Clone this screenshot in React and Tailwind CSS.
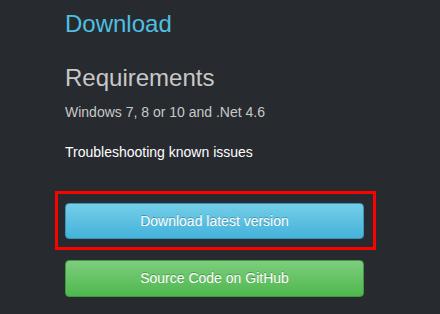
export default function App() {
  const font = { fontFamily: '"Liberation Sans", Arial, sans-serif' };
  return (
    <div className="w-[440px] h-[314px] bg-[#272b30] overflow-hidden" style={font}>
      <div className="pl-[65px] pt-[11px] flex flex-col">
        <h1 className="text-[24px] leading-[26px] text-[#4fbfe0]">Download</h1>
        <h2 className="mt-[28px] text-[24px] leading-[26px] text-[#c8c8c8]">Requirements</h2>
        <p className="mt-[11px] text-[14px] leading-[20px] text-[#c8c8c8]">Windows 7, 8 or 10 and .Net 4.6</p>
        <p className="mt-[20px] text-[14px] leading-[20px] text-white">Troubleshooting known issues</p>
      </div>
      <div className="ml-[55px] mt-[29px] w-[321px] border-[3px] border-[#ff0000] pl-[7px] pt-[9px] pb-[8px]">
        <button className="w-[299px] h-[36px] rounded-[4px] border border-[#3a97b8] bg-gradient-to-b from-[#74cee8] to-[#43b2da] text-white text-[14px] flex items-center justify-center [text-shadow:0_-1px_0_rgba(0,0,0,0.25)]">
          Download latest version
        </button>
      </div>
      <div className="ml-[65px] mt-[10px]">
        <button className="w-[299px] h-[37px] rounded-[4px] border border-[#3f9a3f] bg-gradient-to-b from-[#7dcd7d] to-[#4db84d] text-white text-[14px] flex items-center justify-center [text-shadow:0_-1px_0_rgba(0,0,0,0.25)]">
          Source Code on GitHub
        </button>
      </div>
    </div>
  );
}
